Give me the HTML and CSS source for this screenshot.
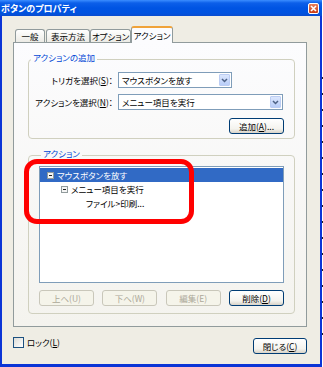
FILE: index.html
```html
<!DOCTYPE html>
<html lang="ja">
<head>
    <meta charset="UTF-8">
    <title>ボタンのプロパティ</title>
    <link rel="stylesheet" href="styles.css">
</head>
<body>
    <div class="window">
        <div class="titlebar">
            <span class="title">ボタンのプロパティ</span>
            <span class="close">
                <svg width="7" height="7" viewBox="0 0 7 7"><path d="M1 1L6 6M6 1L1 6" stroke="#fff" stroke-width="1.6"/></svg>
            </span>
        </div>

        <div class="client">
            <div class="tabs">
                <div class="tab tab-general">一般</div>
                <div class="tab tab-view">表示方法</div>
                <div class="tab tab-option">オプション</div>
                <div class="tab tab-action active">アクション</div>
            </div>

            <div class="panel">
                <fieldset class="group">
                    <legend>アクションの追加</legend>
                    <div class="add-grid">
                        <label class="field-label">トリガを選択(<u>S</u>)：</label>
                        <div class="combo">
                            <span>マウスボタンを放す</span>
                            <span class="drop"><svg width="7" height="5" viewBox="0 0 7 5"><path d="M1 1L3.5 3.5L6 1" fill="none" stroke="#4d6185" stroke-width="1.5"/></svg></span>
                        </div>
                        <label class="field-label">アクションを選択(<u>N</u>)：</label>
                        <div class="combo wide">
                            <span>メニュー項目を実行</span>
                            <span class="drop"><svg width="7" height="5" viewBox="0 0 7 5"><path d="M1 1L3.5 3.5L6 1" fill="none" stroke="#4d6185" stroke-width="1.5"/></svg></span>
                        </div>
                        <button class="btn add-btn">追加(<u>A</u>)...</button>
                    </div>
                </fieldset>

                <fieldset class="group action-group">
                    <legend>アクション</legend>
                    <div class="tree">
                        <div class="node selected"><span class="toggle"></span><span>マウスボタンを放す</span></div>
                        <div class="node lvl1"><span class="toggle"></span><span>メニュー項目を実行</span></div>
                        <div class="node lvl2"><span>ファイル&gt;印刷...</span></div>
                    </div>
                    <div class="group-buttons">
                        <button class="btn" disabled>上へ(U)</button>
                        <button class="btn" disabled>下へ(W)</button>
                        <button class="btn" disabled>編集(E)</button>
                        <button class="btn">削除(<u>D</u>)</button>
                    </div>
                </fieldset>

                <div class="highlight"></div>
            </div>

            <div class="footer">
                <label class="check"><span class="box"></span><span>ロック(<u>L</u>)</span></label>
                <button class="btn close-btn">閉じる(<u>C</u>)</button>
            </div>
        </div>
    </div>
    <div class="edge"></div>
</body>
</html>
```

FILE: styles.css
```css
body {
    margin: 0;
    background: #fff;
    font-family: "Noto Sans CJK JP", sans-serif;
    font-size: 8.5px;
    line-height: 11px;
    font-feature-settings: "palt";
    display: flex;
    align-items: flex-start;
}
.window {
    width: 322px;
    height: 367px;
    display: flex;
    flex-direction: column;
}
.titlebar {
    height: 16px;
    flex: none;
    display: flex;
    align-items: center;
    justify-content: space-between;
    padding: 0 3px 0 1px;
    background: linear-gradient(#3b8dff 0, #0c5fe9 3px, #0054e3 8px, #0053e0 13px, #0a4ccf 16px);
}
.title {
    color: #fff;
    font-weight: bold;
    font-size: 9px;
}
.close {
    width: 11px;
    height: 11px;
    box-sizing: border-box;
    border: 1px solid #fff;
    border-radius: 2px;
    background: linear-gradient(#e9805c, #c93a12);
    display: flex;
    align-items: center;
    justify-content: center;
}
.client {
    flex: 1;
    background: #efede4;
    border: solid #0b35d6;
    border-width: 0 2px 3px;
    padding: 10px 13px 0 11px;
}

/* tabs */
.tabs {
    display: flex;
    align-items: flex-end;
    height: 16px;
    padding-left: 2px;
    position: relative;
    z-index: 1;
}
.tab {
    height: 13px;
    box-sizing: border-box;
    border: 1px solid #919b9c;
    border-bottom: 0;
    border-radius: 3px 3px 0 0;
    background: linear-gradient(#fff, #ecebe5);
    line-height: 12px;
    text-align: center;
    white-space: nowrap;
}
.tab-general { width: 30px; }
.tab-view { width: 44px; margin-left: 1px; }
.tab-option { width: 41px; }
.tab-action { width: 42px; }
.tab.active {
    height: 17px;
    margin-bottom: -1px;
    border-top: 2px solid #f0a33a;
    background: #fcfcfe;
    line-height: 14px;
}

.panel {
    height: 285px;
    box-sizing: border-box;
    border: 1px solid #919b9c;
    background: linear-gradient(#fcfcfe, #f4f3ee);
    padding-left: 14px;
    position: relative;
}

/* group boxes */
.group {
    width: 267px;
    min-width: 0;
    box-sizing: border-box;
    margin: 9px 0 0;
    padding: 5px 10px 4px 0;
    border: 1px solid #d0d0bf;
    border-radius: 4px;
}
.group legend {
    margin-left: 2px;
    padding: 0 2px 4px;
    color: #0046d5;
    line-height: 11px;
}
.action-group {
    padding: 3px 10px 7px 10px;
}
.add-grid {
    display: grid;
    grid-template-columns: 84px auto;
    column-gap: 5px;
    row-gap: 6px;
    align-items: center;
    justify-items: start;
}
.field-label {
    justify-self: end;
    white-space: nowrap;
}
.combo {
    width: 114px;
    height: 16px;
    box-sizing: border-box;
    border: 1px solid #7f9db9;
    background: #fff;
    display: flex;
    align-items: center;
    justify-content: space-between;
    padding: 0 1px 0 3px;
}
.combo.wide { width: 165px; }
.drop {
    width: 11px;
    height: 12px;
    box-sizing: border-box;
    border: 1px solid #bccdf3;
    border-radius: 1px;
    background: linear-gradient(#dbe6fd, #b9cdf8);
    display: flex;
    align-items: center;
    justify-content: center;
}

/* buttons */
.btn {
    width: 55px;
    height: 16px;
    box-sizing: border-box;
    padding: 0;
    border: 1px solid #003c74;
    border-radius: 3px;
    background: linear-gradient(#fff 0, #f4f3ee 70%, #d8d3c8 100%);
    color: #000;
    font: inherit;
    line-height: 12px;
}
.btn:disabled {
    border-color: #c9c7ba;
    background: #f5f4ea;
    color: #aca899;
}
.add-btn {
    grid-column: 1 / -1;
    justify-self: end;
    margin-top: 2px;
}
.close-btn { width: 54px; }

/* tree */
.tree {
    width: 245px;
    height: 117px;
    box-sizing: border-box;
    border: 1px solid #7f9db9;
    background: #fff;
    padding-top: 1px;
}
.node {
    height: 14px;
    display: flex;
    align-items: center;
    gap: 3px;
    padding-left: 7px;
}
.node.selected {
    background: #316ac5;
    color: #fff;
}
.node.lvl1 { padding-left: 21px; }
.node.lvl2 { padding-left: 46px; }
.toggle {
    width: 7px;
    height: 7px;
    box-sizing: border-box;
    border: 1px solid #919b9c;
    background: linear-gradient(#222, #222) center / 3px 1px no-repeat, #f4f4f4;
}
.group-buttons {
    width: 245px;
    display: flex;
    justify-content: space-between;
    margin-top: 7px;
}

.highlight {
    position: absolute;
    left: 10px;
    top: 116px;
    width: 170px;
    height: 65px;
    box-sizing: border-box;
    border: 5px solid #f00;
    border-radius: 13px;
    pointer-events: none;
}

/* footer */
.footer {
    display: flex;
    justify-content: space-between;
    align-items: flex-start;
    margin-top: 11px;
}
.check {
    display: flex;
    align-items: center;
    gap: 3px;
    margin-top: -1px;
}
.box {
    width: 11px;
    height: 11px;
    box-sizing: border-box;
    border: 1px solid #1c5180;
    background: linear-gradient(135deg, #dcdcd7, #fff);
}

.edge {
    width: 1px;
    height: 260px;
    margin-top: 77px;
    background: repeating-linear-gradient(#222 0 2px, transparent 2px 16px);
}
```
